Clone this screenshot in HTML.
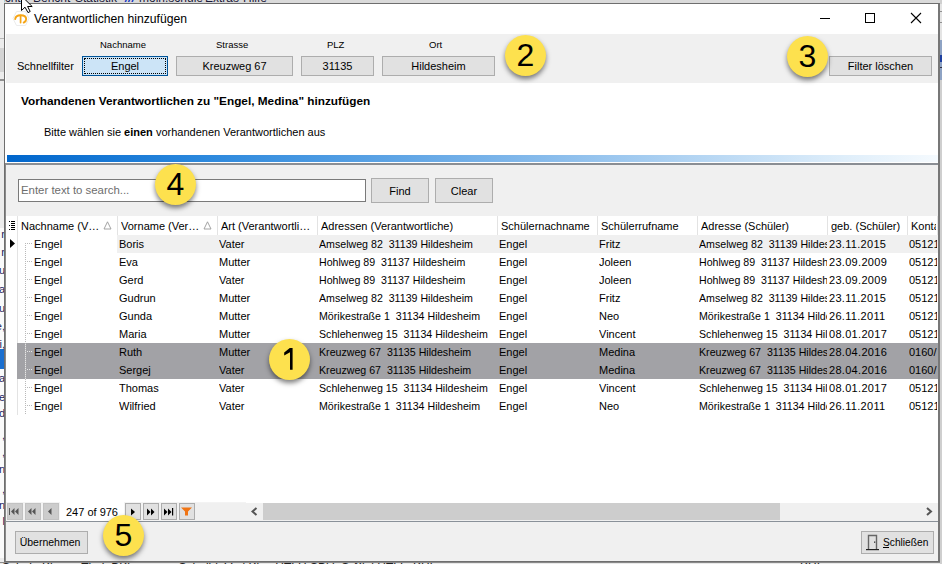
<!DOCTYPE html>
<html><head><meta charset="utf-8">
<style>
*{margin:0;padding:0;box-sizing:border-box}
html,body{width:942px;height:564px;overflow:hidden;background:#e3e3e3;font-family:"Liberation Sans",sans-serif;font-size:11px;color:#000}
.a{position:absolute}
.t{position:absolute;white-space:pre;line-height:13px}
.btn{position:absolute;background:#e1e1e1;border:1px solid #adadad;text-align:center;white-space:pre}
.hc{position:absolute;top:216px;height:19px;line-height:20px;white-space:pre;overflow:hidden}
.cell{position:absolute;white-space:pre;overflow:hidden;height:18px;line-height:18px}
.circle{position:absolute;width:41px;height:41px;border-radius:50%;background:#fde14e;box-shadow:0px 3px 5px rgba(0,0,0,0.5);text-align:center;font-size:32px;line-height:40px;color:#000}
.pb{position:absolute;top:503px;width:16px;height:17px;background:#e1e1e1;border:1px solid #adadad}
.pd{position:absolute;top:503px;width:16px;height:17px;background:#cccccc;border:1px solid #c2c2c2}
</style></head><body>
<!-- background app: menu strip -->
<div class="a" style="left:0;top:0;width:942px;height:4px;background:#dadada;overflow:hidden">
<div class="t" style="left:-4px;top:-8px;font-size:12px;color:#1a1a3a">sicht</div>
<div class="t" style="left:33px;top:-8px;font-size:12px;color:#1a1a3a">Bericht</div>
<div class="t" style="left:75px;top:-8px;font-size:12px;color:#1a1a3a">Statistik</div>
<div class="t" style="left:139px;top:-8px;font-size:12px;color:#1a1a3a">moin.schule</div>
<div class="t" style="left:205px;top:-8px;font-size:12px;color:#1a1a3a">Extras</div>
<div class="t" style="left:243px;top:-8px;font-size:12px;color:#1a1a3a">Hilfe</div>
<div class="t" style="left:125px;top:-8px;font-size:12px;color:#1030c0;font-style:italic;font-weight:bold">///</div>
</div>
<!-- left strip -->
<div class="a" style="left:0;top:0;width:4px;height:564px;background:#ececec;overflow:hidden">
<div class="a" style="left:0;top:38px;width:4px;height:1px;background:#b8b8b8"></div>
<div class="a" style="left:0;top:48px;width:4px;height:24px;background:#d4d4d4"></div>
<div class="a" style="left:0;top:79px;width:4px;height:2px;background:#909090"></div>
<div class="a" style="left:0;top:228px;width:4px;height:330px;background:#fafafa"></div>
<div class="a" style="left:0;top:349px;width:4px;height:20px;background:#1a6fd0"></div>
<div class="t" style="right:-1px;top:228px;color:#1d2560">r</div>
<div class="t" style="right:-1px;top:246px;color:#1d2560">r</div>
<div class="t" style="right:-1px;top:264px;color:#1d2560">u</div>
<div class="t" style="right:-1px;top:283px;color:#1d2560">a</div>
<div class="t" style="right:-1px;top:302px;color:#1d2560">u</div>
<div class="t" style="right:-1px;top:320px;color:#1d2560">e,</div>
<div class="t" style="right:-1px;top:338px;color:#1d2560">i,</div>
<div class="t" style="right:-1px;top:372px;color:#1d2560">a</div>
<div class="t" style="right:-1px;top:391px;color:#1d2560">e</div>
<div class="t" style="right:-1px;top:407px;color:#1d2560">d</div>
<div class="t" style="right:-1px;top:429px;color:#1d2560">,</div>
<div class="t" style="right:-1px;top:446px;color:#1d2560">,</div>
<div class="t" style="right:-1px;top:463px;color:#1d2560">n</div>
<div class="t" style="right:-1px;top:483px;color:#1d2560">,</div>
<div class="t" style="right:-1px;top:499px;color:#1d2560">n</div>
<div class="t" style="right:-1px;top:515px;color:#1d2560">l</div>
</div>
<!-- bottom strip -->
<div class="a" style="left:0;top:562px;width:942px;height:2px;background:linear-gradient(#8a8a8a 0 1px,#e8e8e8 1px);overflow:hidden">
<div class="t" style="left:2px;top:0px;font-size:12px;color:#222">Schule Klasse Thal  BKlasse       Schulbl  Verl Klas HTLH SBkl  Schu</div>
<div class="t" style="left:354px;top:0px;font-size:12px;color:#222">Klol HTLL  KHI</div>
<div class="t" style="left:525px;top:0px;font-size:12px;color:#222">·</div>
<div class="t" style="left:800px;top:0px;font-size:12px;color:#222">KHI</div>
</div>
<!-- right strip -->
<div class="a" style="left:940px;top:0;width:2px;height:564px;background:#cfcfcf"></div>
<div class="a" style="left:940px;top:4px;width:2px;height:36px;background:#e4e4e4"></div>
<div class="a" style="left:940px;top:11px;width:2px;height:1px;background:#909090"></div>
<div class="a" style="left:940px;top:22px;width:2px;height:1px;background:#909090"></div>
<div class="a" style="left:940px;top:40px;width:2px;height:40px;background:#8ea3c4"></div>
<div class="a" style="left:940px;top:55px;width:2px;height:7px;background:#1d3fa0"></div>
<div class="a" style="left:940px;top:67px;width:2px;height:1px;background:#303040"></div>
<!-- dialog -->
<div class="a" style="left:4px;top:3px;width:936px;height:559px;background:#fff;border:1px solid #6e6e6e;border-right:2px solid #777"></div>
<!-- title bar -->
<svg class="a" style="left:12px;top:10px" width="18" height="17" viewBox="0 0 18 17"><path d="M4.5 1.5 L13.5 1.5 L17 8.5 L13.5 15.5 L4.5 15.5 L1 8.5 Z" fill="#fff" stroke="#ececec" stroke-width="1"/><path d="M3.2 9 Q3.6 5.2 8.6 5.2 Q14.2 5.2 14.2 9.2 Q14.2 11.2 11.7 12.6" stroke="#f5a516" stroke-width="1.9" fill="none" stroke-linecap="round"/><path d="M8.6 5.6 V12.6" stroke="#f5a516" stroke-width="1.7" stroke-linecap="round"/></svg>
<div class="t" style="left:34px;top:13px;font-size:12.2px">Verantwortlichen hinzufügen</div>
<div class="a" style="left:820px;top:18px;width:10px;height:1px;background:#000"></div>
<div class="a" style="left:865px;top:13px;width:10px;height:10px;border:1px solid #000"></div>
<svg class="a" style="left:910px;top:12px" width="13" height="13" viewBox="0 0 13 13"><path d="M1 1 L11 11 M11 1 L1 11" stroke="#000" stroke-width="1.1"/></svg>

<!-- filter panel -->
<div class="a" style="left:6px;top:34px;width:932px;height:49px;background:#f0f0f0"></div>
<div class="t" style="left:100px;top:38px;font-size:9.5px">Nachname</div>
<div class="t" style="left:216px;top:38px;font-size:9.5px">Strasse</div>
<div class="t" style="left:327px;top:38px;font-size:9.5px">PLZ</div>
<div class="t" style="left:429px;top:38px;font-size:9.5px">Ort</div>
<div class="t" style="left:17px;top:60px">Schnellfilter</div>
<div class="btn" style="left:82px;top:56px;width:86px;height:20px;background:#cce4f7;border-color:#005499;line-height:18px">Engel</div>
<div class="a" style="left:84px;top:58px;width:82px;height:16px;border:1px dotted #000"></div>
<div class="btn" style="left:176px;top:56px;width:117px;height:20px;line-height:18px">Kreuzweg 67</div>
<div class="btn" style="left:301px;top:56px;width:73px;height:20px;line-height:18px">31135</div>
<div class="btn" style="left:382px;top:56px;width:113px;height:20px;line-height:18px">Hildesheim</div>
<div class="btn" style="left:829px;top:56px;width:103px;height:20px;line-height:18px">Filter löschen</div>

<!-- info -->
<div class="t" style="left:21px;top:95px;font-weight:bold;font-size:11.8px">Vorhandenen Verantwortlichen zu "Engel, Medina" hinzufügen</div>
<div class="t" style="left:44px;top:126px">Bitte wählen sie <b>einen</b> vorhandenen Verantwortlichen aus</div>
<div class="a" style="left:7px;top:155px;width:931px;height:7px;background:linear-gradient(to right,#0066cc 0%,#2b88dd 21%,#80b7ea 55%,#dfeefa 90%,#f5fafe 100%)"></div>
<div class="a" style="left:6px;top:163px;width:932px;height:2px;background:#8a8e94"></div>

<div class="a" style="left:5px;top:163px;width:1px;height:398px;background:#8a8a8a"></div>
<!-- search panel -->
<div class="a" style="left:6px;top:165px;width:932px;height:51px;background:#f0f0f0"></div>
<div class="a" style="left:18px;top:179px;width:348px;height:23px;background:#fff;border:1px solid #7a7a7a"></div>
<div class="t" style="left:21px;top:184px;color:#6d6d6d;font-size:11.4px">Enter text to search...</div>
<div class="btn" style="left:371px;top:178px;width:58px;height:25px;line-height:25px">Find</div>
<div class="btn" style="left:435px;top:178px;width:58px;height:25px;line-height:25px">Clear</div>

<!-- grid -->
<div class="a" style="left:6px;top:216px;width:932px;height:287px;background:#fff"></div>
<div class="a" style="left:6px;top:216px;width:932px;height:19px;background:#fff"></div>
<div class="a" style="left:17px;top:216px;width:1px;height:19px;background:#e3e3e3"></div>
<div class="a" style="left:117px;top:216px;width:1px;height:19px;background:#e3e3e3"></div>
<div class="hc" style="left:21px;width:95px">Nachname (V…</div>
<div class="a" style="left:217px;top:216px;width:1px;height:19px;background:#e3e3e3"></div>
<div class="hc" style="left:121px;width:95px">Vorname (Ver…</div>
<div class="a" style="left:317px;top:216px;width:1px;height:19px;background:#e3e3e3"></div>
<div class="hc" style="left:221px;width:95px">Art (Verantwortli…</div>
<div class="a" style="left:497px;top:216px;width:1px;height:19px;background:#e3e3e3"></div>
<div class="hc" style="left:321px;width:175px">Adressen (Verantwortliche)</div>
<div class="a" style="left:597px;top:216px;width:1px;height:19px;background:#e3e3e3"></div>
<div class="hc" style="left:501px;width:95px">Schülernachname</div>
<div class="a" style="left:697px;top:216px;width:1px;height:19px;background:#e3e3e3"></div>
<div class="hc" style="left:601px;width:95px">Schülerrufname</div>
<div class="a" style="left:827px;top:216px;width:1px;height:19px;background:#e3e3e3"></div>
<div class="hc" style="left:701px;width:125px">Adresse (Schüler)</div>
<div class="a" style="left:907px;top:216px;width:1px;height:19px;background:#e3e3e3"></div>
<div class="hc" style="left:831px;width:75px">geb. (Schüler)</div>
<div class="a" style="left:937px;top:216px;width:1px;height:19px;background:#e3e3e3"></div>
<div class="hc" style="left:911px;width:25px">Konta</div>
<svg class="a" style="left:103px;top:221px" width="9" height="9"><path d="M4.5 0.8 L8 8 L1 8 Z" fill="none" stroke="#9a9a9a" stroke-width="0.9"/></svg>
<svg class="a" style="left:203px;top:221px" width="9" height="9"><path d="M4.5 0.8 L8 8 L1 8 Z" fill="none" stroke="#9a9a9a" stroke-width="0.9"/></svg>
<div class="a" style="left:17px;top:235px;width:1px;height:180px;background:#e3e3e3"></div>
<div class="a" style="left:117px;top:235px;width:821px;height:18px;background:#f0f0f0"></div>
<div class="cell" style="left:34px;top:235px;width:83px">Engel</div>
<div class="cell" style="left:119px;top:235px;width:98px;">Boris</div>
<div class="cell" style="left:219px;top:235px;width:98px;">Vater</div>
<div class="cell" style="left:319px;top:235px;width:178px;"><span style="display:inline-block;transform:scaleX(0.966);transform-origin:0 0">Amselweg 82  31139 Hildesheim</span></div>
<div class="cell" style="left:499px;top:235px;width:98px;">Engel</div>
<div class="cell" style="left:599px;top:235px;width:98px;">Fritz</div>
<div class="cell" style="left:699px;top:235px;width:128px;"><span style="display:inline-block;transform:scaleX(0.966);transform-origin:0 0">Amselweg 82  31139 Hildesheim</span></div>
<div class="cell" style="left:829px;top:235px;width:78px;letter-spacing:0.3px;">23.11.2015</div>
<div class="cell" style="left:909px;top:235px;width:28px;">05121</div>
<div class="cell" style="left:34px;top:253px;width:83px">Engel</div>
<div class="cell" style="left:119px;top:253px;width:98px;">Eva</div>
<div class="cell" style="left:219px;top:253px;width:98px;">Mutter</div>
<div class="cell" style="left:319px;top:253px;width:178px;"><span style="display:inline-block;transform:scaleX(0.966);transform-origin:0 0">Hohlweg 89  31137 Hildesheim</span></div>
<div class="cell" style="left:499px;top:253px;width:98px;">Engel</div>
<div class="cell" style="left:599px;top:253px;width:98px;">Joleen</div>
<div class="cell" style="left:699px;top:253px;width:128px;"><span style="display:inline-block;transform:scaleX(0.966);transform-origin:0 0">Hohlweg 89  31137 Hildesheim</span></div>
<div class="cell" style="left:829px;top:253px;width:78px;letter-spacing:0.3px;">23.09.2009</div>
<div class="cell" style="left:909px;top:253px;width:28px;">05121</div>
<div class="cell" style="left:34px;top:271px;width:83px">Engel</div>
<div class="cell" style="left:119px;top:271px;width:98px;">Gerd</div>
<div class="cell" style="left:219px;top:271px;width:98px;">Vater</div>
<div class="cell" style="left:319px;top:271px;width:178px;"><span style="display:inline-block;transform:scaleX(0.966);transform-origin:0 0">Hohlweg 89  31137 Hildesheim</span></div>
<div class="cell" style="left:499px;top:271px;width:98px;">Engel</div>
<div class="cell" style="left:599px;top:271px;width:98px;">Joleen</div>
<div class="cell" style="left:699px;top:271px;width:128px;"><span style="display:inline-block;transform:scaleX(0.966);transform-origin:0 0">Hohlweg 89  31137 Hildesheim</span></div>
<div class="cell" style="left:829px;top:271px;width:78px;letter-spacing:0.3px;">23.09.2009</div>
<div class="cell" style="left:909px;top:271px;width:28px;">05121</div>
<div class="cell" style="left:34px;top:289px;width:83px">Engel</div>
<div class="cell" style="left:119px;top:289px;width:98px;">Gudrun</div>
<div class="cell" style="left:219px;top:289px;width:98px;">Mutter</div>
<div class="cell" style="left:319px;top:289px;width:178px;"><span style="display:inline-block;transform:scaleX(0.966);transform-origin:0 0">Amselweg 82  31139 Hildesheim</span></div>
<div class="cell" style="left:499px;top:289px;width:98px;">Engel</div>
<div class="cell" style="left:599px;top:289px;width:98px;">Fritz</div>
<div class="cell" style="left:699px;top:289px;width:128px;"><span style="display:inline-block;transform:scaleX(0.966);transform-origin:0 0">Amselweg 82  31139 Hildesheim</span></div>
<div class="cell" style="left:829px;top:289px;width:78px;letter-spacing:0.3px;">23.11.2015</div>
<div class="cell" style="left:909px;top:289px;width:28px;">05121</div>
<div class="cell" style="left:34px;top:307px;width:83px">Engel</div>
<div class="cell" style="left:119px;top:307px;width:98px;">Gunda</div>
<div class="cell" style="left:219px;top:307px;width:98px;">Mutter</div>
<div class="cell" style="left:319px;top:307px;width:178px;"><span style="display:inline-block;transform:scaleX(0.966);transform-origin:0 0">Mörikestraße 1  31134 Hildesheim</span></div>
<div class="cell" style="left:499px;top:307px;width:98px;">Engel</div>
<div class="cell" style="left:599px;top:307px;width:98px;">Neo</div>
<div class="cell" style="left:699px;top:307px;width:128px;"><span style="display:inline-block;transform:scaleX(0.966);transform-origin:0 0">Mörikestraße 1  31134 Hildesheim</span></div>
<div class="cell" style="left:829px;top:307px;width:78px;letter-spacing:0.3px;">26.11.2011</div>
<div class="cell" style="left:909px;top:307px;width:28px;">05121</div>
<div class="cell" style="left:34px;top:325px;width:83px">Engel</div>
<div class="cell" style="left:119px;top:325px;width:98px;">Maria</div>
<div class="cell" style="left:219px;top:325px;width:98px;">Mutter</div>
<div class="cell" style="left:319px;top:325px;width:178px;"><span style="display:inline-block;transform:scaleX(0.966);transform-origin:0 0">Schlehenweg 15  31134 Hildesheim</span></div>
<div class="cell" style="left:499px;top:325px;width:98px;">Engel</div>
<div class="cell" style="left:599px;top:325px;width:98px;">Vincent</div>
<div class="cell" style="left:699px;top:325px;width:128px;"><span style="display:inline-block;transform:scaleX(0.966);transform-origin:0 0">Schlehenweg 15  31134 Hildesheim</span></div>
<div class="cell" style="left:829px;top:325px;width:78px;letter-spacing:0.3px;">08.01.2017</div>
<div class="cell" style="left:909px;top:325px;width:28px;">05121</div>
<div class="a" style="left:17px;top:343px;width:921px;height:18px;background:#a2a2a6"></div>
<div class="cell" style="left:34px;top:343px;width:83px">Engel</div>
<div class="cell" style="left:119px;top:343px;width:98px;">Ruth</div>
<div class="cell" style="left:219px;top:343px;width:98px;">Mutter</div>
<div class="cell" style="left:319px;top:343px;width:178px;"><span style="display:inline-block;transform:scaleX(0.966);transform-origin:0 0">Kreuzweg 67  31135 Hildesheim</span></div>
<div class="cell" style="left:499px;top:343px;width:98px;">Engel</div>
<div class="cell" style="left:599px;top:343px;width:98px;">Medina</div>
<div class="cell" style="left:699px;top:343px;width:128px;"><span style="display:inline-block;transform:scaleX(0.966);transform-origin:0 0">Kreuzweg 67  31135 Hildesheim</span></div>
<div class="cell" style="left:829px;top:343px;width:78px;letter-spacing:0.3px;">28.04.2016</div>
<div class="cell" style="left:909px;top:343px;width:28px;">0160/</div>
<div class="a" style="left:17px;top:361px;width:921px;height:18px;background:#a2a2a6"></div>
<div class="cell" style="left:34px;top:361px;width:83px">Engel</div>
<div class="cell" style="left:119px;top:361px;width:98px;">Sergej</div>
<div class="cell" style="left:219px;top:361px;width:98px;">Vater</div>
<div class="cell" style="left:319px;top:361px;width:178px;"><span style="display:inline-block;transform:scaleX(0.966);transform-origin:0 0">Kreuzweg 67  31135 Hildesheim</span></div>
<div class="cell" style="left:499px;top:361px;width:98px;">Engel</div>
<div class="cell" style="left:599px;top:361px;width:98px;">Medina</div>
<div class="cell" style="left:699px;top:361px;width:128px;"><span style="display:inline-block;transform:scaleX(0.966);transform-origin:0 0">Kreuzweg 67  31135 Hildesheim</span></div>
<div class="cell" style="left:829px;top:361px;width:78px;letter-spacing:0.3px;">28.04.2016</div>
<div class="cell" style="left:909px;top:361px;width:28px;">0160/</div>
<div class="cell" style="left:34px;top:379px;width:83px">Engel</div>
<div class="cell" style="left:119px;top:379px;width:98px;">Thomas</div>
<div class="cell" style="left:219px;top:379px;width:98px;">Vater</div>
<div class="cell" style="left:319px;top:379px;width:178px;"><span style="display:inline-block;transform:scaleX(0.966);transform-origin:0 0">Schlehenweg 15  31134 Hildesheim</span></div>
<div class="cell" style="left:499px;top:379px;width:98px;">Engel</div>
<div class="cell" style="left:599px;top:379px;width:98px;">Vincent</div>
<div class="cell" style="left:699px;top:379px;width:128px;"><span style="display:inline-block;transform:scaleX(0.966);transform-origin:0 0">Schlehenweg 15  31134 Hildesheim</span></div>
<div class="cell" style="left:829px;top:379px;width:78px;letter-spacing:0.3px;">08.01.2017</div>
<div class="cell" style="left:909px;top:379px;width:28px;">05121</div>
<div class="cell" style="left:34px;top:397px;width:83px">Engel</div>
<div class="cell" style="left:119px;top:397px;width:98px;">Wilfried</div>
<div class="cell" style="left:219px;top:397px;width:98px;">Vater</div>
<div class="cell" style="left:319px;top:397px;width:178px;"><span style="display:inline-block;transform:scaleX(0.966);transform-origin:0 0">Mörikestraße 1  31134 Hildesheim</span></div>
<div class="cell" style="left:499px;top:397px;width:98px;">Engel</div>
<div class="cell" style="left:599px;top:397px;width:98px;">Neo</div>
<div class="cell" style="left:699px;top:397px;width:128px;"><span style="display:inline-block;transform:scaleX(0.966);transform-origin:0 0">Mörikestraße 1  31134 Hildesheim</span></div>
<div class="cell" style="left:829px;top:397px;width:78px;letter-spacing:0.3px;">26.11.2011</div>
<div class="cell" style="left:909px;top:397px;width:28px;">05121</div>
<div class="a" style="left:25px;top:243px;width:1px;height:171px;background:repeating-linear-gradient(to bottom,#b9b9b9 0 1px,transparent 1px 2px)"></div>
<div class="a" style="left:25px;top:344px;width:1px;height:35px;background:repeating-linear-gradient(to bottom,#e6e6e6 0 1px,transparent 1px 2px)"></div>
<div class="a" style="left:27px;top:243px;width:6px;height:1px;background:repeating-linear-gradient(to right,#b9b9b9 0 1px,transparent 1px 2px)"></div>
<div class="a" style="left:27px;top:261px;width:6px;height:1px;background:repeating-linear-gradient(to right,#b9b9b9 0 1px,transparent 1px 2px)"></div>
<div class="a" style="left:27px;top:279px;width:6px;height:1px;background:repeating-linear-gradient(to right,#b9b9b9 0 1px,transparent 1px 2px)"></div>
<div class="a" style="left:27px;top:297px;width:6px;height:1px;background:repeating-linear-gradient(to right,#b9b9b9 0 1px,transparent 1px 2px)"></div>
<div class="a" style="left:27px;top:315px;width:6px;height:1px;background:repeating-linear-gradient(to right,#b9b9b9 0 1px,transparent 1px 2px)"></div>
<div class="a" style="left:27px;top:333px;width:6px;height:1px;background:repeating-linear-gradient(to right,#b9b9b9 0 1px,transparent 1px 2px)"></div>
<div class="a" style="left:27px;top:351px;width:6px;height:1px;background:repeating-linear-gradient(to right,#e6e6e6 0 1px,transparent 1px 2px)"></div>
<div class="a" style="left:27px;top:369px;width:6px;height:1px;background:repeating-linear-gradient(to right,#e6e6e6 0 1px,transparent 1px 2px)"></div>
<div class="a" style="left:27px;top:387px;width:6px;height:1px;background:repeating-linear-gradient(to right,#b9b9b9 0 1px,transparent 1px 2px)"></div>
<div class="a" style="left:27px;top:405px;width:6px;height:1px;background:repeating-linear-gradient(to right,#b9b9b9 0 1px,transparent 1px 2px)"></div>
<svg class="a" style="left:10px;top:239px" width="6" height="10"><path d="M0 0 L5 4.5 L0 9 Z" fill="#000"/></svg>
<svg class="a" style="left:9px;top:220px" width="7" height="11"><g fill="#000"><rect x="0" y="1" width="1" height="1"/><rect x="0" y="5" width="1" height="1"/><rect x="0" y="9" width="1" height="1"/><rect x="2" y="1" width="4" height="1"/><rect x="2" y="3" width="4" height="1"/><rect x="2" y="5" width="4" height="1"/><rect x="2" y="7" width="4" height="1"/><rect x="2" y="9" width="4" height="1"/></g></svg>

<!-- pager -->
<div class="a" style="left:6px;top:502px;width:240px;height:19px;background:#f3f3f3"></div>
<div class="a" style="left:60px;top:502px;width:64px;height:19px;background:#fff"></div>
<div class="a" style="left:195px;top:503px;width:743px;height:18px;background:#f0f0f0"></div>
<div class="a" style="left:263px;top:503px;width:517px;height:17px;background:#cdcdcd"></div>
<div class="pd" style="left:7px"></div>
<div class="pd" style="left:25px"></div>
<div class="pd" style="left:43px"></div>
<svg class="a" style="left:7px;top:503px" width="54" height="17"><g fill="#555"><rect x="2" y="5" width="1" height="7"/><path d="M4 8.5 L7.5 5 L7.5 12 Z"/><path d="M8 8.5 L11.5 5 L11.5 12 Z"/><path d="M21 8.5 L24.5 5 L24.5 12 Z"/><path d="M25 8.5 L28.5 5 L28.5 12 Z"/><path d="M41 8.5 L44.5 5 L44.5 12 Z"/></g></svg>
<div class="t" style="left:66px;top:506px">247 of 976</div>
<div class="pb" style="left:125px"></div>
<div class="pb" style="left:143px"></div>
<div class="pb" style="left:161px"></div>
<div class="pb" style="left:179px"></div>
<svg class="a" style="left:125px;top:503px" width="70" height="17"><g fill="#000"><path d="M6 5.5 L10 9 L6 12.5 Z"/><path d="M22 5.5 L25.5 9 L22 12.5 Z"/><path d="M26 5.5 L29.5 9 L26 12.5 Z"/><path d="M39 5.5 L42.5 9 L39 12.5 Z"/><path d="M43 5.5 L46.5 9 L43 12.5 Z"/><rect x="47" y="5" width="1.2" height="7.5"/></g><path d="M56 4.5 L67 4.5 L63 8.5 L63 12.5 L60 12.5 L60 8.5 Z" fill="#f07414"/></svg>
<svg class="a" style="left:250px;top:507px" width="9" height="10"><path d="M6.5 1 L2.5 4.5 L6.5 8" stroke="#555" stroke-width="2" fill="none"/></svg>
<svg class="a" style="left:925px;top:507px" width="9" height="10"><path d="M2 1 L6 4.5 L2 8" stroke="#555" stroke-width="2" fill="none"/></svg>
<div class="a" style="left:6px;top:521px;width:932px;height:1px;background:#8a9199"></div>

<!-- bottom panel -->
<div class="a" style="left:6px;top:522px;width:932px;height:39px;background:#f0f0f0"></div>
<div class="btn" style="left:15px;top:531px;width:73px;height:23px;line-height:21px;font-size:10.5px;padding-right:3px">Übernehmen</div>
<div class="btn" style="left:861px;top:531px;width:73px;height:23px;line-height:21px;text-align:left;padding-left:21px;font-size:10.2px">Schließen</div>
<div class="a" style="left:883px;top:547px;width:6px;height:1px;background:#000"></div>
<svg class="a" style="left:866px;top:534px" width="13" height="17"><path d="M2.5 15.5 V1.5 H10.5 V15.5" stroke="#666" stroke-width="1.4" fill="none"/><path d="M0 15.6 H13" stroke="#222" stroke-width="1.2"/><rect x="8" y="7.5" width="1.3" height="1.3" fill="#333"/></svg>

<!-- cursor -->
<svg class="a" style="left:19px;top:0" width="16" height="15"><path d="M2.5 -4 L2.5 10.5 L6 7.2 L9 12.6 L11.2 11.5 L8.6 6.5 L13.2 6.5 Z" fill="#fff" stroke="#000" stroke-width="1" stroke-linejoin="round"/></svg>

<!-- callouts -->
<div class="circle" style="left:269px;top:339px"><svg class="a" style="left:0;top:0" width="41" height="41"><path d="M23.6 9 L20.8 9 L15.2 13.6 L15.2 16.6 L21 13.3 L21 30.8 L23.6 30.8 Z" fill="#000"/></svg></div>
<div class="circle" style="left:505px;top:35px">2</div>
<div class="circle" style="left:787px;top:36px">3</div>
<div class="circle" style="left:155px;top:164px">4</div>
<div class="circle" style="left:103px;top:515px">5</div>
</body></html>
